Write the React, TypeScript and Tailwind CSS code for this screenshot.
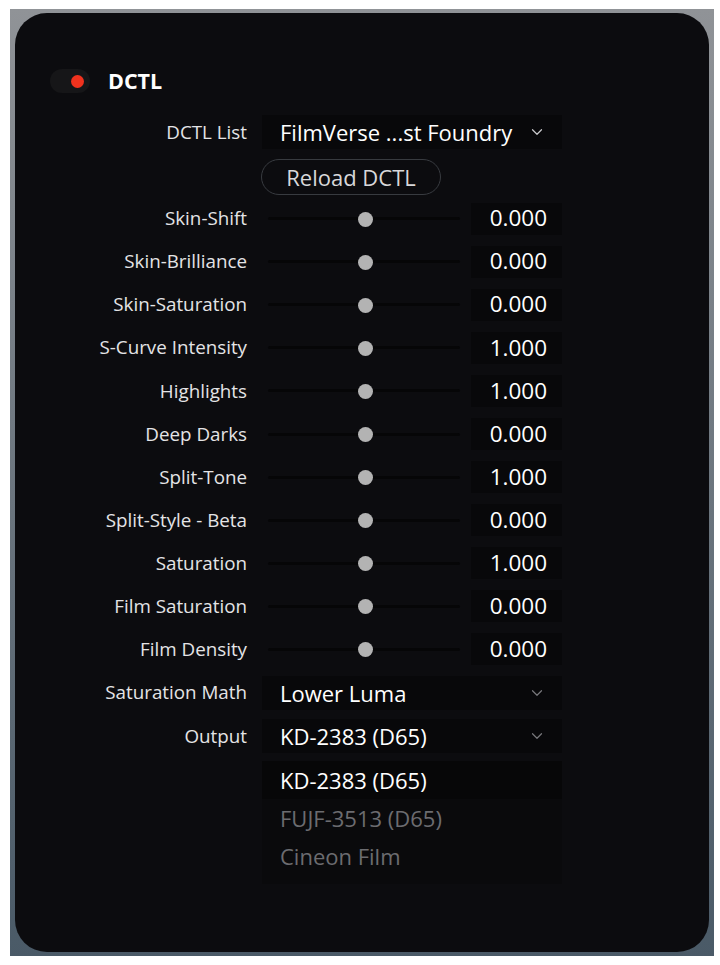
import { ChevronDown } from "lucide-react";

type Slider = { label: string; value: string };

const sliders: Slider[] = [
  { label: "Skin-Shift", value: "0.000" },
  { label: "Skin-Brilliance", value: "0.000" },
  { label: "Skin-Saturation", value: "0.000" },
  { label: "S-Curve Intensity", value: "1.000" },
  { label: "Highlights", value: "1.000" },
  { label: "Deep Darks", value: "0.000" },
  { label: "Split-Tone", value: "1.000" },
  { label: "Split-Style - Beta", value: "0.000" },
  { label: "Saturation", value: "1.000" },
  { label: "Film Saturation", value: "0.000" },
  { label: "Film Density", value: "0.000" },
];

function Label({ children }: { children: React.ReactNode }) {
  return (
    <div className="w-[232px] shrink-0 text-right text-[18.8px] text-[#e4e4e6] leading-none">
      {children}
    </div>
  );
}

function SliderRow({ label, value }: Slider) {
  return (
    <div className="flex h-[43.1px] items-center gap-[15px]">
      <Label>{label}</Label>
      <div className="flex w-[300px] items-center">
        {/* track + knob */}
        <div className="relative flex h-[14px] w-[200px] items-center pl-[6px] pr-[2px]">
          <div className="h-[3px] w-full rounded-full bg-[#060607]" />
          <div className="absolute left-[96px] top-0 h-[15px] w-[15px] rounded-full bg-[#b3b3b3]" />
        </div>
        <div className="ml-[9px] flex h-[32px] w-[91px] items-center justify-end bg-[#08080a] pr-[15px] text-[22.5px] text-white leading-none">
          {value}
        </div>
      </div>
    </div>
  );
}

function Select({ value, bright }: { value: string; bright?: boolean }) {
  return (
    <div className="flex h-[34px] w-[300px] items-center justify-between bg-[#08080a] pl-[18px] pr-[16px]">
      <span className="text-[22px] text-white leading-none">{value}</span>
      <ChevronDown
        size={18}
        strokeWidth={1.6}
        className={bright ? "text-[#c9c9cc]" : "text-[#77777b]"}
      />
    </div>
  );
}

export default function App() {
  return (
    <div className="min-h-[965px] bg-white pl-[10px] pt-[9px] font-['Open_Sans','Noto_Sans',sans-serif]">
      <div className="w-[704px] bg-gradient-to-b from-[#909397] to-[#4a5a67] pb-[4px] pl-[5px] pr-[5px] pt-[4px]">
        <div className="h-[939px] rounded-[32px] bg-[#0c0c0f] pt-[55px]">
          {/* header */}
          <div className="flex h-[26px] items-center pl-[35px]">
            <div className="flex h-[24px] w-[40px] items-center justify-end rounded-full bg-[#161618] pr-[6px]">
              <div className="h-[13px] w-[13px] rounded-full bg-[#f0321e]" />
            </div>
            <span className="ml-[18px] text-[21.5px] font-bold text-white leading-none">DCTL</span>
          </div>

          {/* dctl list */}
          <div className="mt-[21px] flex items-center gap-[15px]">
            <Label>DCTL List</Label>
            <Select value="FilmVerse ...st Foundry" bright />
          </div>
          <div className="mt-[10px] pl-[246px]">
            <div className="flex h-[36px] w-[180px] items-center justify-center rounded-full border border-[#383b40] text-[22px] text-[#d8d8da] leading-none">
              Reload DCTL
            </div>
          </div>

          <div className="mt-[2px]">
            {sliders.map((s) => (
              <SliderRow key={s.label} {...s} />
            ))}
          </div>

          <div className="flex h-[43px] items-center gap-[15px]">
            <Label>Saturation Math</Label>
            <Select value="Lower Luma" />
          </div>
          <div className="flex h-[44px] items-center gap-[15px]">
            <Label>Output</Label>
            <Select value="KD-2383 (D65)" />
          </div>

          {/* open list */}
          <div className="ml-[247px] mt-[3px] w-[300px] bg-[#0a0a0c] pb-[9px]">
            <div className="flex h-[38px] items-center bg-[#070708] pl-[18px] text-[22px] text-white">
              KD-2383 (D65)
            </div>
            <div className="flex h-[38px] items-center pl-[18px] text-[22px] text-[#6c6c70]">
              FUJF-3513 (D65)
            </div>
            <div className="flex h-[38px] items-center pl-[18px] text-[22px] text-[#6c6c70]">
              Cineon Film
            </div>
          </div>
        </div>
      </div>
    </div>
  );
}
